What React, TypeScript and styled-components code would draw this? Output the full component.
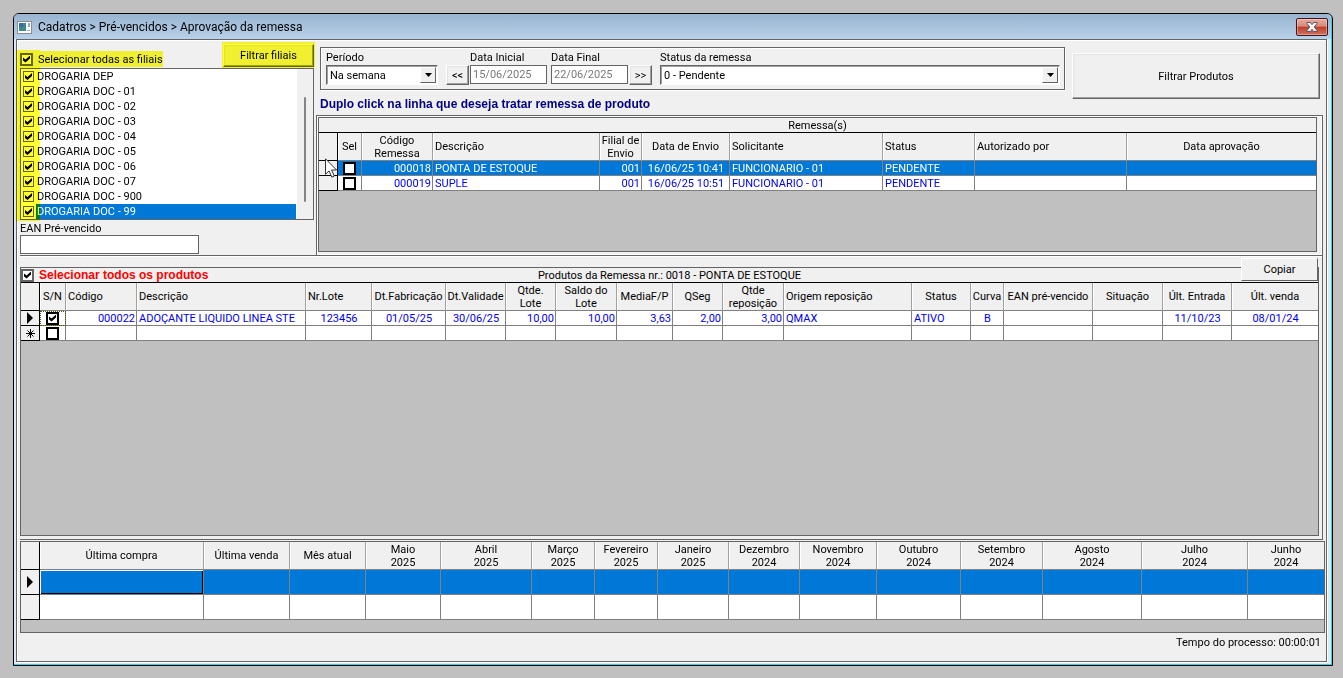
import React from "react";
import styled, { createGlobalStyle, css } from "styled-components";

const line = "#646464";
const face = "#f0f0f0";
const blue = "#0078d7";
const marker = "#ffff33";

const GlobalStyle = createGlobalStyle`
  *, *::before, *::after { box-sizing: border-box; }
  body { margin: 0; background: #c0c0c0; }
  body, button, input, select {
    font-family: Roboto, "Liberation Sans", sans-serif;
    font-size: 11px;
    line-height: 13px;
    color: #000;
  }
`;

const Desktop = styled.div`
  display: flex;
  min-height: 100vh;
  padding: 13px 10px 12px 13px;
  background: #c0c0c0;
`;

const Window = styled.main`
  flex: 1;
  min-width: 0;
  display: flex;
  flex-direction: column;
  border: 1px solid #000;
  border-radius: 6px 6px 0 0;
  background: #dce9f5;
  box-shadow: inset -1px -1px 0 #35cfe8;
`;

const TitleBar = styled.header`
  display: flex;
  align-items: center;
  gap: 6px;
  height: 25px;
  padding: 1px 3px 0 3px;
  margin-right: 1px;
  border-radius: 5px 5px 0 0;
  background: linear-gradient(#98b4d0, #b9d1ea);
`;

const Title = styled.h1`
  flex: 1;
  margin: 0;
  font: 400 12px/16px Roboto, "Noto Sans", sans-serif;
`;

const CloseButton = styled.button`
  display: flex;
  align-items: center;
  justify-content: center;
  width: 32px;
  height: 18px;
  padding: 0;
  border: 1px solid #43141a;
  border-radius: 2px;
  background: linear-gradient(#e9a99b 0, #d98878 45%, #bd3f2a 50%, #d0705c 100%);
  box-shadow: inset 0 0 0 1px rgba(255, 255, 255, 0.35);
`;

const BodyRim = styled.div`
  flex: 1;
  display: flex;
  padding: 0 5px 3px 2px;
`;

const Body = styled.div`
  flex: 1;
  min-width: 0;
  display: flex;
  flex-direction: column;
  border: 1px solid ${line};
  background: ${face};
  box-shadow: 1px 1px 0 #fff, inset 1px 1px 0 #fff;
`;

const Upper = styled.div`
  display: grid;
  grid-template-columns: 296px minmax(0, 1fr);
  margin: 0 3px;
`;

const Branches = styled.section`
  position: relative;
  padding-right: 2px;
`;

const BranchHead = styled.div`
  display: flex;
  justify-content: space-between;
  height: 28px;
`;

const CheckLabel = styled.label<{ $bold?: boolean }>`
  display: flex;
  align-items: center;
  gap: 5px;
  ${(p) =>
    p.$bold &&
    css`
      color: #f00;
      font: 700 12px/13px "Liberation Sans", sans-serif;
    `}
`;

const BranchAll = styled(CheckLabel)`
  height: 16px;
  margin-top: 11px;
`;

const Highlight = styled.span`
  position: absolute;
  background: ${marker};
  mix-blend-mode: multiply;
  pointer-events: none;
`;

const StripMark = styled(Highlight)`
  left: -4px;
  top: 10px;
  width: 24px;
  height: 171px;
`;

const LabelMark = styled(Highlight)`
  left: 20px;
  top: 11px;
  width: 123px;
  height: 16px;
`;

const ButtonMark = styled(Highlight)`
  right: 1px;
  top: 2px;
  width: 93px;
  height: 26px;
`;

const Check = styled.input.attrs({ type: "checkbox" })<{ $tone?: "grid" | "list" }>`
  appearance: none;
  flex: none;
  position: relative;
  width: 13px;
  height: 13px;
  margin: 0;
  background: #fff;
  border: 2px solid ${line};
  ${(p) => p.$tone === "grid" && css`border-color: #000;`}
  ${(p) =>
    p.$tone === "list" &&
    css`
      width: 11px;
      height: 11px;
      border: 1px solid ${line};
    `}
  &:checked::before {
    content: "";
    position: absolute;
    inset: 1px;
    background: #000;
    clip-path: polygon(0 30%, 36% 58%, 100% 0, 100% 42%, 36% 100%, 0 72%);
  }
`;

const Raised = styled.button`
  padding: 0;
  border: 1px solid;
  border-color: #fff ${line} ${line} #fff;
  background: ${face};
  box-shadow: inset -1px -1px 0 #a0a0a0, inset 1px 1px 0 #e3e3e3;
`;

const BranchButton = styled(Raised)`
  width: 91px;
  height: 23px;
  margin-top: 4px;
`;

const ListBox = styled.div`
  display: flex;
  height: 152px;
  border: 1px solid ${line};
  background: #fff;
`;

const List = styled.ul`
  flex: 1;
  margin: 0;
  padding: 0 1px 0 0;
  list-style: none;
`;

const ListItem = styled.li<{ $selected?: boolean }>`
  height: 15px;
  color: ${(p) => (p.$selected ? "#fff" : "#000")};
  label {
    display: flex;
    align-items: center;
    gap: 3px;
    height: 15px;
    padding-left: 2px;
    line-height: 15px;
    background: ${(p) => (p.$selected ? `linear-gradient(90deg, #fff 15px, ${blue} 15px)` : "none")};
  }
`;

const Track = styled.div`
  width: 16px;
  padding: 28px 7px 17px;
  background: ${face};
`;

const Thumb = styled.div`
  height: 100%;
  border-radius: 1px;
  background: #858585;
`;

const EanField = styled.label`
  display: block;
  padding-top: 2px;
  input {
    display: block;
    width: 179px;
    height: 19px;
    padding: 0 3px;
    border: 1px solid ${line};
    background: #fff;
  }
`;

const Right = styled.section`
  min-width: 0;
  display: flex;
  flex-direction: column;
`;

const Tools = styled.div`
  display: flex;
  gap: 7px;
  padding: 7px 3px 0 4px;
  height: 50px;
`;

const Filters = styled.form`
  flex: 1;
  display: flex;
  align-items: flex-start;
  height: 43px;
  padding: 3px 4px 0 5px;
  border: 1px solid ${line};
  box-shadow: inset 1px 1px 0 #fff, 1px 1px 0 #fff;
`;

const Field = styled.label<{ $width?: number }>`
  display: flex;
  flex-direction: column;
  width: ${(p) => (p.$width ? `${p.$width}px` : "auto")};
  flex: ${(p) => (p.$width ? "none" : "1")};
  > span:first-child { height: 14px; }
`;

const Combo = styled.span`
  display: flex;
  position: relative;
  height: 20px;
  border: 1px solid;
  border-color: ${line} #fff #fff ${line};
  box-shadow: inset 1px 1px 0 #a0a0a0;
  background: #fff;
  select {
    appearance: none;
    flex: 1;
    min-width: 0;
    border: 0;
    padding: 0 18px 0 3px;
    background: transparent;
    outline: 0;
  }
`;

const ComboArrow = styled.span`
  position: absolute;
  top: 1px;
  right: 1px;
  bottom: 1px;
  width: 16px;
  display: grid;
  place-items: center;
  border: 1px solid;
  border-color: #fff ${line} ${line} #fff;
  background: ${face};
  pointer-events: none;
`;

const DateInput = styled.input`
  height: 19px;
  padding: 0 2px;
  border: 1px solid ${line};
  background: #fff;
  color: #787878;
`;

const Step = styled(Raised)`
  width: 23px;
  height: 20px;
  margin-top: 14px;
`;

const Gap = styled.span<{ $w: number }>`
  flex: none;
  width: ${(p) => p.$w}px;
`;

const FilterProducts = styled(Raised)`
  width: 248px;
  height: 46px;
  margin-top: 6px;
`;

const Hint = styled.p`
  margin: 0;
  padding: 7px 0 0 4px;
  height: 25px;
  color: #000080;
  font: 700 12px/14px "Liberation Sans", sans-serif;
`;

const ShipFrame = styled.div`
  padding: 1px 5px 3px 1px;
  border: 1px solid ${line};
  box-shadow: inset 0 0 0 1px #fff;
  height: 141px;
`;

const ProductFrame = styled.section`
  position: relative;
  flex: 1;
  display: flex;
  margin: -1px 3px 0 3px;
  padding: 11px 3px 3px 0;
  border: 1px solid ${line};
  border-left: 0;
  box-shadow: inset 0 1px 0 #fff;
`;

const GridBox = styled.div<{ $fill?: boolean }>`
  flex: 1;
  min-width: 0;
  height: ${(p) => (p.$fill ? "auto" : "100%")};
  border: 1px solid ${line};
  background: #c0c0c0;
`;

const CaptionBar = styled.div`
  display: grid;
  grid-template-columns: 1fr auto 1fr;
  align-items: center;
  height: 15px;
  border-bottom: 1px solid #000;
  background: ${face};
`;

const CaptionText = styled.span`
  grid-column: 2;
`;

const Table = styled.table<{ $row: number }>`
  width: 100%;
  table-layout: fixed;
  border-collapse: separate;
  border-spacing: 0;
  td, th { height: ${(p) => p.$row}px; }
  thead th { height: 28px; }
  tr > *:last-child { border-right: 0; }
`;

type Align = "left" | "center" | "right";

const Head = styled.th<{ $align?: Align }>`
  padding: ${(p) => (p.$align === "left" ? "0 0 0 2px" : "0")};
  border-right: 1px solid #a0a0a0;
  border-bottom: 1px solid #808080;
  background: ${face};
  box-shadow: inset 1px 0 0 #fff;
  font-weight: 400;
  line-height: 13px;
  text-align: ${(p) => p.$align ?? "center"};
  white-space: pre-line;
  overflow: hidden;
`;

const RowHead = styled.th`
  padding: 0;
  border-right: 1px solid #000;
  border-bottom: 1px solid #000;
  background: ${face};
  line-height: 0;
  svg { display: inline-block; }
`;

const Cell = styled.td<{ $align?: Align; $selected?: boolean }>`
  padding: 1px 1px 0 2px;
  border-right: 1px solid #808080;
  border-bottom: 1px solid #808080;
  background: ${(p) => (p.$selected ? blue : "#fff")};
  color: ${(p) => (p.$selected ? "#fff" : "#0000f0")};
  line-height: 13px;
  text-align: ${(p) => p.$align ?? "left"};
  white-space: nowrap;
  overflow: hidden;
`;

const CheckCell = styled(Cell)<{ $focus?: boolean }>`
  padding: 0;
  ${(p) => p.$focus && css`outline: 1px dotted #555500; outline-offset: -1px;`}
  ${Check} { display: block; margin: 0 auto; }
`;

const ActiveCell = styled(Cell)`
  box-shadow: inset 1px 1px 0 #fff, inset -1px -1px 0 #000;
`;

const CopyButton = styled(Raised)`
  position: absolute;
  top: 2px;
  right: 4px;
  width: 77px;
  height: 23px;
  box-shadow: none;
`;

const History = styled.section`
  height: 92px;
  margin: 1px 1px 0 3px;
`;

const Footer = styled.footer`
  height: 28px;
  padding: 3px 5px 0;
  text-align: right;
`;

const Cursor = styled.svg`
  position: absolute;
  left: 325px;
  top: 158px;
  pointer-events: none;
`;

const Down = () => (
  <svg width="7" height="4" viewBox="0 0 7 4" aria-hidden="true"><path d="M0 0h7L3.500 4z" /></svg>
);
const RowArrow = () => (
  <svg width="6" height="12" viewBox="0 0 6 12" aria-hidden="true"><path d="M0 0l6 6-6 6z" /></svg>
);
const NewMark = () => (
  <svg width="9" height="9" viewBox="0 0 9 9" aria-hidden="true">
    <path d="M4.500 0v9M0 4.500h9M1.500 1.500l6 6M7.500 1.500l-6 6" stroke="#000" strokeWidth="1" />
  </svg>
);

const branches = ["DEP", "DOC - 01", "DOC - 02", "DOC - 03", "DOC - 04", "DOC - 05", "DOC - 06", "DOC - 07", "DOC - 900", "DOC - 99"];

interface Column { label: string; width?: number; head?: Align; cell?: Align }

const shipCols: Column[] = [
  { label: "Sel", width: 24 },
  { label: "Código\nRemessa", width: 71, cell: "right" },
  { label: "Descrição", width: 167, head: "left" },
  { label: "Filial de\nEnvio", width: 42, cell: "right" },
  { label: "Data de Envio", width: 88, cell: "center" },
  { label: "Solicitante", width: 153, head: "left" },
  { label: "Status", width: 92, head: "left" },
  { label: "Autorizado por", width: 152, head: "left" },
  { label: "Data aprovação" },
];
const shipRows = [
  ["000018", "PONTA DE ESTOQUE", "001", "16/06/25 10:41", "FUNCIONARIO - 01", "PENDENTE", "", ""],
  ["000019", "SUPLE", "001", "16/06/25 10:51", "FUNCIONARIO - 01", "PENDENTE", "", ""],
];

const productCols: Column[] = [
  { label: "S/N", width: 26 },
  { label: "Código", width: 71, head: "left", cell: "right" },
  { label: "Descrição", width: 169, head: "left" },
  { label: "Nr.Lote", width: 66, head: "left", cell: "center" },
  { label: "Dt.Fabricação", width: 74, cell: "center" },
  { label: "Dt.Validade", width: 60, cell: "center" },
  { label: "Qtde.\nLote", width: 50, cell: "right" },
  { label: "Saldo do\nLote", width: 61, cell: "right" },
  { label: "MediaF/P", width: 56, cell: "right" },
  { label: "QSeg", width: 50, cell: "right" },
  { label: "Qtde\nreposição", width: 61, cell: "right" },
  { label: "Origem reposição", width: 128, head: "left" },
  { label: "Status", width: 59 },
  { label: "Curva", width: 33, cell: "center" },
  { label: "EAN pré-vencido", width: 89 },
  { label: "Situação", width: 70 },
  { label: "Últ. Entrada", width: 69, cell: "center" },
  { label: "Últ. venda", cell: "center" },
];
const product = ["000022", "ADOÇANTE LIQUIDO LINEA STE", "123456", "01/05/25", "30/06/25", "10,00", "10,00", "3,63", "2,00", "3,00", "QMAX", "ATIVO", "B", "", "", "11/10/23", "08/01/24"];

const historyCols: Column[] = [
  { label: "Última compra", width: 164 },
  { label: "Última venda", width: 86 },
  { label: "Mês atual", width: 76 },
  { label: "Maio\n2025", width: 75 },
  { label: "Abril\n2025", width: 91 },
  { label: "Março\n2025", width: 63 },
  { label: "Fevereiro\n2025", width: 63 },
  { label: "Janeiro\n2025", width: 71 },
  { label: "Dezembro\n2024", width: 71 },
  { label: "Novembro\n2024", width: 77 },
  { label: "Outubro\n2024", width: 84 },
  { label: "Setembro\n2024", width: 82 },
  { label: "Agosto\n2024", width: 99 },
  { label: "Julho\n2024", width: 106 },
  { label: "Junho\n2024" },
];

const Columns = ({ cols }: { cols: Column[] }) => (
  <>
    <colgroup>
      <col width={19} />
      {cols.map((c) => <col key={c.label} width={c.width} />)}
    </colgroup>
    <thead>
      <tr>
        <RowHead />
        {cols.map((c) => <Head key={c.label} scope="col" $align={c.head}>{c.label}</Head>)}
      </tr>
    </thead>
  </>
);

export default function App() {
  return (
    <>
      <GlobalStyle />
      <Desktop>
        <Window>
          <TitleBar>
            <svg width="15" height="13" viewBox="0 0 15 13" aria-hidden="true">
              <rect x=".5" y=".5" width="14" height="12" fill="#fff" stroke="#8c8c8c" />
              <rect x="2" y="2" width="7" height="8" fill="#3f8a86" />
              <rect x="2" y="2" width="4" height="4" fill="#3b6fa0" />
              <path d="M12 2v4" stroke="#2b4f9a" />
              <path d="M10 9.500h3" stroke="#9aa" />
            </svg>
            <Title>Cadatros &gt; Pré-vencidos &gt; Aprovação da remessa</Title>
            <CloseButton aria-label="Fechar">
              <svg width="12" height="10" viewBox="0 0 12 10" aria-hidden="true">
                <path d="M1 .5h3.200L6 2.600 7.800.5H11v1L8.300 5 11 8.500v1H7.800L6 7.400 4.200 9.500H1v-1L3.700 5 1 1.500z" fill="#f4f4f4" stroke="#535666" />
              </svg>
            </CloseButton>
          </TitleBar>
          <BodyRim>
            <Body>
              <Upper>
                <Branches>
                  <BranchHead>
                    <BranchAll><Check defaultChecked />Selecionar todas as filiais</BranchAll>
                    <BranchButton type="button">Filtrar filiais</BranchButton>
                  </BranchHead>
                  <ListBox>
                    <List>
                      {branches.map((b, i) => (
                        <ListItem key={b} $selected={i === branches.length - 1}>
                          <label><Check $tone="list" defaultChecked />DROGARIA {b}</label>
                        </ListItem>
                      ))}
                    </List>
                    <Track><Thumb /></Track>
                  </ListBox>
                  <EanField>EAN Pré-vencido<input type="text" /></EanField>
                  <StripMark />
                  <LabelMark />
                  <ButtonMark />
                </Branches>
                <Right>
                  <Tools>
                    <Filters>
                      <Field $width={112}>
                        <span>Período</span>
                        <Combo>
                          <select><option>Na semana</option></select>
                          <ComboArrow><Down /></ComboArrow>
                        </Combo>
                      </Field>
                      <Gap $w={8} />
                      <Step type="button">&lt;&lt;</Step>
                      <Gap $w={1} />
                      <Field $width={77}>
                        <span>Data Inicial</span>
                        <DateInput defaultValue="15/06/2025" disabled />
                      </Field>
                      <Gap $w={4} />
                      <Field $width={77}>
                        <span>Data Final</span>
                        <DateInput defaultValue="22/06/2025" disabled />
                      </Field>
                      <Gap $w={1} />
                      <Step type="button">&gt;&gt;</Step>
                      <Gap $w={8} />
                      <Field>
                        <span>Status da remessa</span>
                        <Combo>
                          <select><option>0 - Pendente</option></select>
                          <ComboArrow><Down /></ComboArrow>
                        </Combo>
                      </Field>
                    </Filters>
                    <FilterProducts type="button">Filtrar Produtos</FilterProducts>
                  </Tools>
                  <Hint>Duplo click na linha que deseja tratar remessa de produto</Hint>
                  <ShipFrame>
                    <GridBox>
                      <CaptionBar><CaptionText>Remessa(s)</CaptionText></CaptionBar>
                      <Table $row={15}>
                        <Columns cols={shipCols} />
                        <tbody>
                          {shipRows.map((row, r) => (
                            <tr key={row[0]}>
                              <RowHead />
                              <CheckCell $selected={r === 0}><Check $tone="grid" aria-label={row[0]} /></CheckCell>
                              {row.map((v, i) => (
                                <Cell key={i} $selected={r === 0} $align={shipCols[i + 1].cell}>{v}</Cell>
                              ))}
                            </tr>
                          ))}
                        </tbody>
                      </Table>
                    </GridBox>
                  </ShipFrame>
                </Right>
              </Upper>
              <ProductFrame>
                <GridBox $fill>
                  <CaptionBar>
                    <CheckLabel $bold><Check defaultChecked />Selecionar todos os produtos</CheckLabel>
                    <CaptionText>Produtos da Remessa nr.: 0018 - PONTA DE ESTOQUE</CaptionText>
                  </CaptionBar>
                  <Table $row={15}>
                    <Columns cols={productCols} />
                    <tbody>
                      <tr>
                        <RowHead><RowArrow /></RowHead>
                        <CheckCell $focus><Check $tone="grid" defaultChecked aria-label="000022" /></CheckCell>
                        {product.map((v, i) => <Cell key={i} $align={productCols[i + 1].cell}>{v}</Cell>)}
                      </tr>
                      <tr>
                        <RowHead><NewMark /></RowHead>
                        <CheckCell><Check $tone="grid" aria-label="Novo produto" /></CheckCell>
                        {product.map((_, i) => <Cell key={i} />)}
                      </tr>
                    </tbody>
                  </Table>
                </GridBox>
                <CopyButton type="button">Copiar</CopyButton>
              </ProductFrame>
              <History>
                <GridBox>
                  <Table $row={25}>
                    <Columns cols={historyCols} />
                    <tbody>
                      <tr>
                        <RowHead><RowArrow /></RowHead>
                        <ActiveCell $selected />
                        {historyCols.slice(1).map((c) => <Cell key={c.label} $selected />)}
                      </tr>
                      <tr>
                        <RowHead />
                        {historyCols.map((c) => <Cell key={c.label} />)}
                      </tr>
                    </tbody>
                  </Table>
                </GridBox>
              </History>
              <Footer>Tempo do processo: 00:00:01</Footer>
            </Body>
          </BodyRim>
        </Window>
        <Cursor width="13" height="21" viewBox="0 0 13 21" aria-hidden="true">
          <path d="M.5 .8v15.500l3.600-3.400 2.700 6.300 2.500-1.100-2.700-6.100h5z" fill="#fff" stroke="#333" />
        </Cursor>
      </Desktop>
    </>
  );
}
